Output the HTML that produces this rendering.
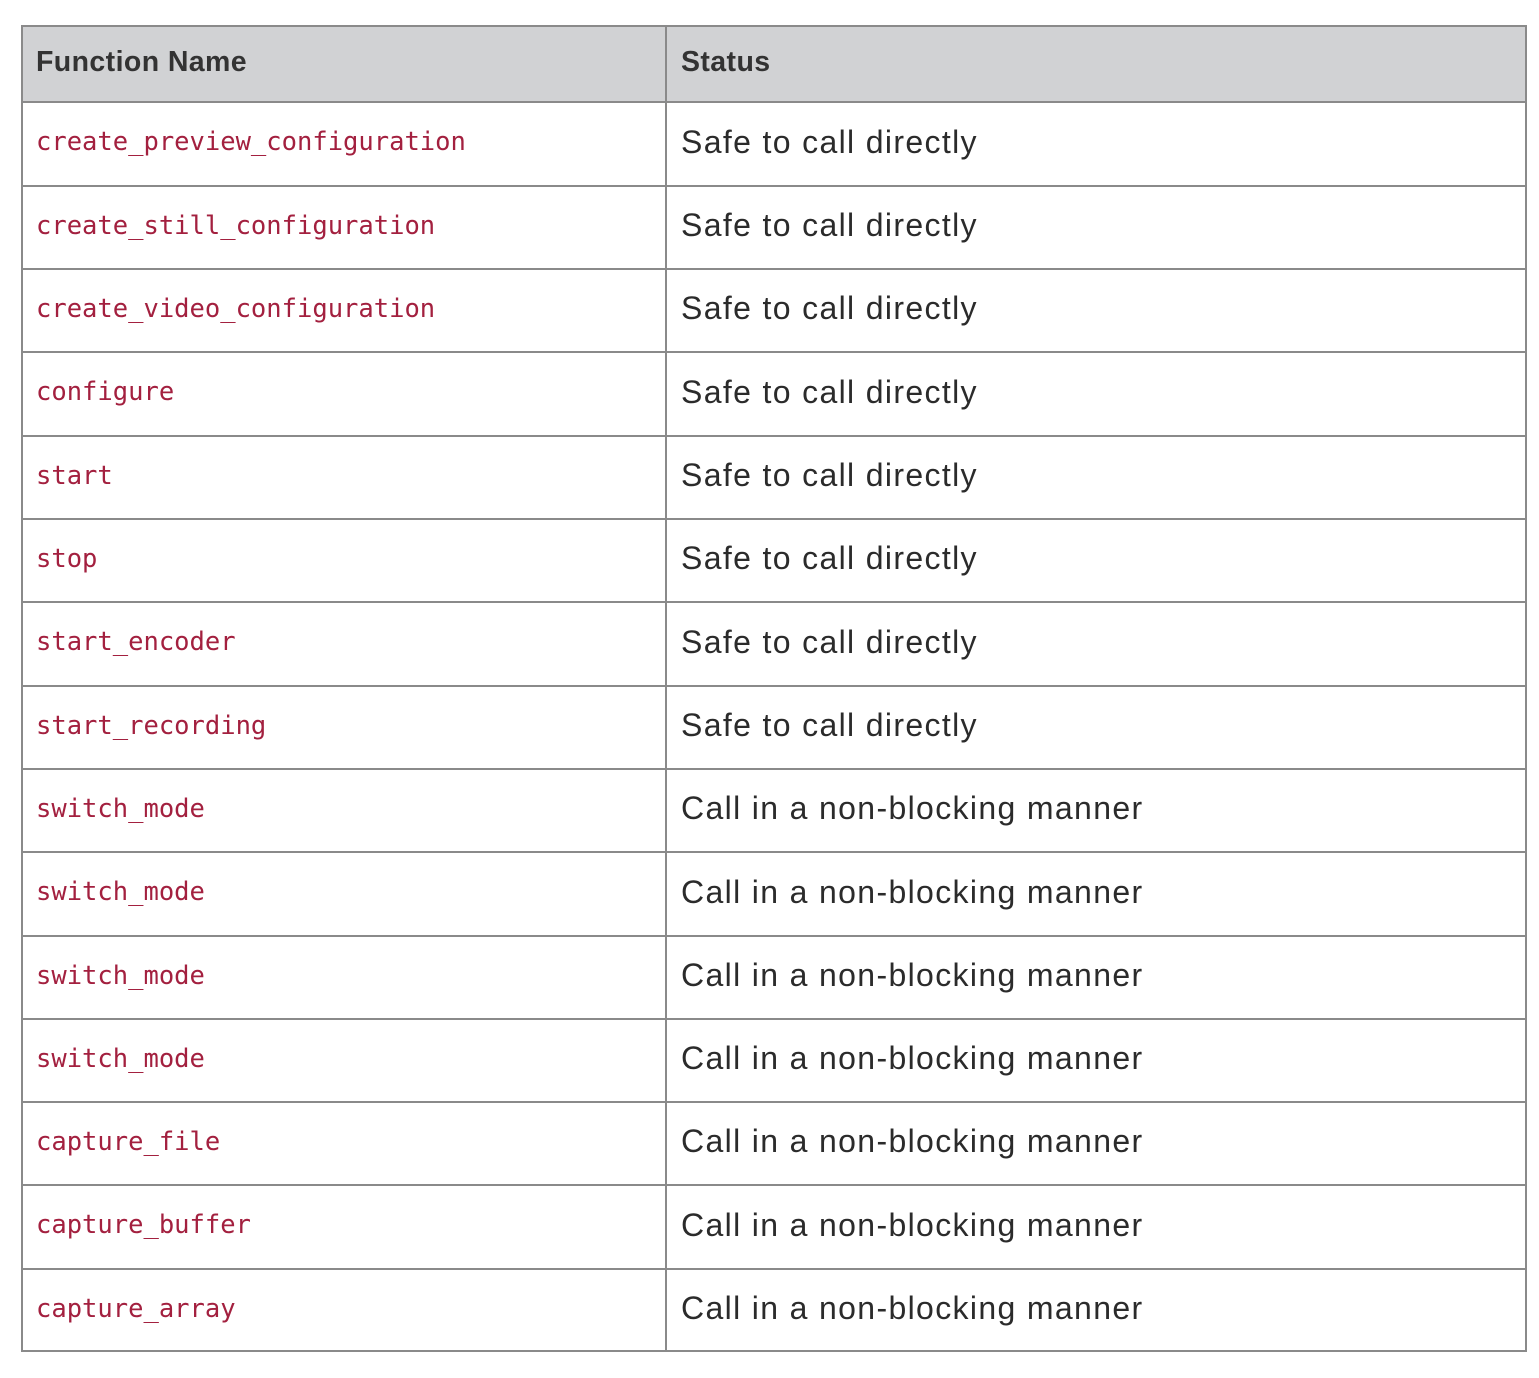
<!DOCTYPE html>
<html><head><style>
body{margin:0;background:#fff;width:1539px;height:1378px;position:relative;overflow:hidden}
.t{position:absolute;left:21px;top:25px;width:1506px;height:1327px;border:2px solid #8a8a8a;box-sizing:border-box}
.hd{position:absolute;left:21px;top:25px;width:1506px;height:78px;background:#d1d2d4}
.h{position:absolute;left:21px;width:1506px;height:2px;background:#8a8a8a}
.v{position:absolute;left:665px;top:25px;width:2px;height:1327px;background:#8a8a8a}
.c{position:absolute;height:83px;display:flex;align-items:center}
.f{left:36px;font-family:"DejaVu Sans Mono","Liberation Mono",monospace;font-size:25.5px;color:#a3203f}
.s{left:681px;font-family:"Liberation Sans",Arial,sans-serif;font-size:32px;letter-spacing:1.35px;color:#2b2b2b}
.b{font-family:"Liberation Sans",Arial,sans-serif;font-weight:bold;font-size:28.5px;letter-spacing:0.4px;color:#333;height:74px}
</style></head><body>
<div class="hd"></div>
<div class="t"></div>
<div class="v"></div>
<div class="c b" style="left:36px;top:25px">Function Name</div>
<div class="c b" style="left:681px;top:25px">Status</div>
<div id="r"></div>
<script>
var names=["create_preview_configuration","create_still_configuration","create_video_configuration","configure","start","stop","start_encoder","start_recording","switch_mode","switch_mode","switch_mode","switch_mode","capture_file","capture_buffer","capture_array"];
var lines=[101,185,268,351,435,518,601,685,768,851,935,1018,1101,1184,1268,1351];
var h="";
for(var i=0;i<15;i++){h+='<div class="h" style="top:'+lines[i]+'px"></div>';}
for(var i=0;i<15;i++){var t=lines[i]-1,hh=lines[i+1]-lines[i];
h+='<div class="c f" style="top:'+t+'px;height:'+hh+'px">'+names[i]+'</div>';
h+='<div class="c s" style="top:'+t+'px;height:'+hh+'px">'+(i<8?"Safe to call directly":"Call in a non-blocking manner")+'</div>';}
document.getElementById("r").innerHTML=h;
</script>
</body></html>
